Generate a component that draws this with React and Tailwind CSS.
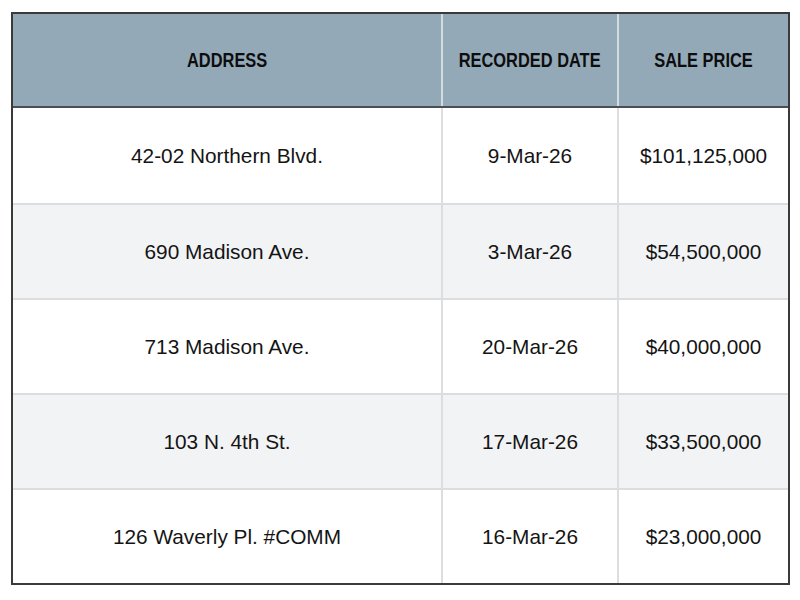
import React from 'react'

const rows = [
  ['42-02 Northern Blvd.', '9-Mar-26', '$101,125,000'],
  ['690 Madison Ave.', '3-Mar-26', '$54,500,000'],
  ['713 Madison Ave.', '20-Mar-26', '$40,000,000'],
  ['103 N. 4th St.', '17-Mar-26', '$33,500,000'],
  ['126 Waverly Pl. #COMM', '16-Mar-26', '$23,000,000'],
]

const cols = 'grid grid-cols-[428px_176px_171px]'

function Head({ children, first }) {
  return (
    <div className={`flex items-center justify-center ${first ? '' : 'border-l-2 border-[#d3dbe0]'}`}>
      <span className="inline-block scale-x-[0.8] whitespace-nowrap">{children}</span>
    </div>
  )
}

export default function App() {
  return (
    <div className="w-[800px] h-[600px] bg-white pt-[12px] pl-[11px]">
      <div className="w-[779px] border-2 border-[#3a3a3a] bg-white">
        <div className={`${cols} h-[94px] bg-[#93a9b7] border-b-2 border-[#4a4f53] text-[20.5px] font-bold text-[#0d0d0d] font-['Liberation_Sans',Arial,sans-serif]`}>
          <Head first>ADDRESS</Head>
          <Head>RECORDED DATE</Head>
          <Head>SALE PRICE</Head>
        </div>
        {rows.map((r, i) => (
          <div
            key={i}
            className={`${cols} h-[95px] text-[20.8px] text-[#141414] font-['Liberation_Sans',Arial,sans-serif] ${i > 0 ? 'border-t-2 border-[#dcdddf]' : ''} ${i % 2 === 1 ? 'bg-[#f2f3f5]' : 'bg-white'}`}
          >
            <div className="flex items-center justify-center">{r[0]}</div>
            <div className="flex items-center justify-center border-l-2 border-[#dcdddf]">{r[1]}</div>
            <div className="flex items-center justify-center border-l-2 border-[#dcdddf]">{r[2]}</div>
          </div>
        ))}
      </div>
    </div>
  )
}
